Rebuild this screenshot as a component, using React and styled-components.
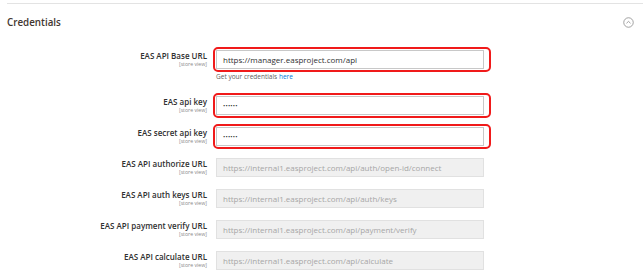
import React from "react";
import styled, { createGlobalStyle } from "styled-components";

const GlobalStyle = createGlobalStyle`
  html, body {
    margin: 0;
    padding: 0;
    background: #ffffff;
    font-family: "Open Sans", "Liberation Sans", sans-serif;
    color: #303030;
  }
`;

const fields = [
  { label: "EAS API Base URL", value: "https://manager.easproject.com/api", marked: true, note: true },
  { label: "EAS api key", value: "••••••", marked: true, secret: true },
  { label: "EAS secret api key", value: "••••••", marked: true, secret: true },
  { label: "EAS API authorize URL", value: "https://internal1.easproject.com/api/auth/open-id/connect", disabled: true },
  { label: "EAS API auth keys URL", value: "https://internal1.easproject.com/api/auth/keys", disabled: true },
  { label: "EAS API payment verify URL", value: "https://internal1.easproject.com/api/payment/verify", disabled: true },
  { label: "EAS API calculate URL", value: "https://internal1.easproject.com/api/calculate", disabled: true },
];

const CollapseIcon = () => (
  <svg width="11" height="11" viewBox="0 0 22 22">
    <circle cx="11" cy="11" r="9.5" fill="none" stroke="#8a8a8a" strokeWidth="1.6" />
    <path d="M7 12.5 L11 8.8 L15 12.5" fill="none" stroke="#8a8a8a" strokeWidth="1.6" />
  </svg>
);

const App = () => (
  <>
    <GlobalStyle />
    <Section>
      <Header>
        <Title>Credentials</Title>
        <CollapseIcon />
      </Header>
      <Fields>
        {fields.map((field) => (
          <Row key={field.label} $note={field.note}>
            <Label>
              <LabelText>{field.label}</LabelText>
              <Scope>[store view]</Scope>
            </Label>
            <Control>
              <InputWrap>
                <Input $disabled={field.disabled} $secret={field.secret}>
                  {field.value}
                </Input>
                {field.marked && <Marker />}
              </InputWrap>
              {field.note && (
                <Note>
                  Get your credentials <NoteLink>here</NoteLink>
                </Note>
              )}
            </Control>
          </Row>
        ))}
      </Fields>
    </Section>
  </>
);

const Section = styled.div`
  margin-top: 3px;
  margin-left: 7px;
  border-top: 1px solid #e3e3e3;
`;

const Header = styled.div`
  display: flex;
  align-items: center;
  justify-content: space-between;
  padding: 11px 9px 0 0;
  height: 15px;
`;

const Title = styled.h2`
  margin: 0;
  font-size: 9.8px;
  font-weight: 600;
  color: #41362f;
`;

const Fields = styled.div`
  display: flex;
  flex-direction: column;
  margin-top: 20px;
`;

const Row = styled.div`
  display: grid;
  grid-template-columns: 200px 268px;
  column-gap: 9px;
  align-items: start;
  margin-bottom: ${(p) => (p.$note ? "15px" : "12px")};
`;

const Label = styled.div`
  display: flex;
  flex-direction: column;
  align-items: flex-end;
  height: 19px;
  padding-top: 1px;
  box-sizing: border-box;
`;

const LabelText = styled.span`
  font-size: 8px;
  font-weight: 600;
  line-height: 10px;
  color: #303030;
`;

const Scope = styled.span`
  font-size: 5.2px;
  line-height: 7px;
  color: #8a8a8a;
`;

const Control = styled.div`
  display: flex;
  flex-direction: column;
`;

const InputWrap = styled.div`
  position: relative;
  height: 19px;
`;

const Input = styled.div`
  box-sizing: border-box;
  height: 19px;
  display: flex;
  align-items: center;
  padding-left: 6px;
  font-size: ${(p) => (p.$secret ? "6px" : "8px")};
  letter-spacing: ${(p) => (p.$secret ? "0.2px" : "0")};
  color: ${(p) => (p.$disabled ? "#a6a6a6" : "#303030")};
  background: ${(p) => (p.$disabled ? "#f0f0f0" : "#ffffff")};
  border: 1px solid ${(p) => (p.$disabled ? "#e1e1e1" : "#c8c8c8")};
  white-space: nowrap;
`;

const Marker = styled.div`
  position: absolute;
  top: -3px;
  bottom: -3px;
  left: -3px;
  right: -7px;
  border: 2px solid #f01a1a;
  border-radius: 5px;
  pointer-events: none;
`;

const Note = styled.div`
  margin-top: 3px;
  font-size: 6.5px;
  line-height: 9px;
  color: #606060;
`;

const NoteLink = styled.span`
  color: #007bdb;
`;

export default App;
